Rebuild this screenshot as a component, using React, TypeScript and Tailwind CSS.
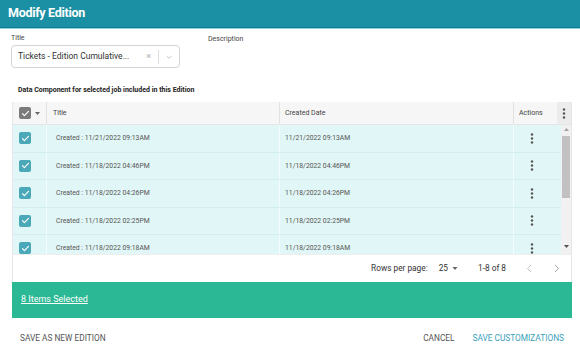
import React from 'react';

const rows = [
  '11/21/2022 09:13AM',
  '11/18/2022 04:46PM',
  '11/18/2022 04:26PM',
  '11/18/2022 02:25PM',
  '11/18/2022 09:18AM',
];

const Check = ({ gray }: { gray?: boolean }) => (
  <div className={`w-[12px] h-[12px] rounded-[2px] flex items-center justify-center ${gray ? 'bg-[#7b7b7b]' : 'bg-[#4aa8b9]'}`}>
    <svg width="9" height="9" viewBox="0 0 24 24" fill="none" stroke="white" strokeWidth="3.2" strokeLinecap="round" strokeLinejoin="round">
      <path d="M4 12.5l5 5L20 6.5" />
    </svg>
  </div>
);

const Dots = () => (
  <svg width="4" height="11" viewBox="0 0 4 11" fill="#555">
    <circle cx="2" cy="1.5" r="1.2" />
    <circle cx="2" cy="5.5" r="1.2" />
    <circle cx="2" cy="9.5" r="1.2" />
  </svg>
);

const App: React.FC = () => {
  return (
    <div className="w-[580px] h-[348px] bg-white overflow-hidden font-['Roboto',sans-serif] text-[#333]">
      {/* header */}
      <div className="h-[27px] bg-[#1b8fa3] flex items-center pl-[8px]">
        <span className="text-white font-bold text-[12.5px] tracking-[-0.3px]">Modify Edition</span>
      </div>
      <div className="h-[1px] bg-[#137e91]" />
      <div className="h-[1px] bg-[#8fd3dd]" />

      {/* form */}
      <div className="flex pl-[11px] pt-[4px]">
        <div className="w-[197px]">
          <div className="text-[7px] text-[#444] leading-[10px]">Title</div>
          <div className="mt-[2px] w-[169px] h-[23px] border border-[#d4d4d4] rounded-[4px] flex items-center pl-[6px]">
            <span className="text-[8.5px] text-[#333] flex-1 whitespace-nowrap">Tickets - Edition Cumulative...</span>
            <span className="text-[#aaa] text-[9px] mr-[7px]">×</span>
            <div className="w-[1px] h-[14px] bg-[#ddd]" />
            <svg className="mx-[6px]" width="8" height="8" viewBox="0 0 24 24" fill="none" stroke="#bbb" strokeWidth="2.5"><path d="M5 9l7 7 7-7" /></svg>
          </div>
        </div>
        <div className="text-[7px] text-[#444] leading-[10px] pt-[1px]">Description</div>
      </div>

      <div className="pl-[18px] mt-[17px] text-[7px] font-bold text-[#222] leading-[10px]">
        Data Component for selected job included in this Edition
      </div>

      {/* table */}
      <div className="ml-[12px] mt-[7px] w-[560px] border-x border-[#e6e6e6]">
        <div className="h-[23px] bg-[#f6f6f6] flex text-[7px] text-[#444] border-b border-[#e4e4e4]">
          <div className="w-[34px] flex items-center pl-[6px] gap-[4px] border-r border-[#e2e2e2]">
            <Check gray />
            <svg width="5" height="3" viewBox="0 0 5 3" fill="#666"><path d="M0 0h5L2.5 3z" /></svg>
          </div>
          <div className="w-[233px] flex items-center pl-[6px] border-r border-[#e2e2e2]">Title</div>
          <div className="w-[234px] flex items-center pl-[5px] border-r border-[#e2e2e2]">Created Date</div>
          <div className="w-[43px] flex items-center pl-[5px]">Actions</div>
          <div className="flex-1 bg-[#ececec] flex items-center justify-center"><Dots /></div>
        </div>
        <div className="h-[129px] overflow-hidden flex">
          <div className="flex-1">
            {rows.map((d) => (
              <div key={d} className="h-[27.5px] flex bg-[#e1f6f6] border-b border-[#d3eeee] text-[6.8px] text-[#555]">
                <div className="w-[34px] flex items-center pl-[6px] border-r border-[#f4fcfc]"><Check /></div>
                <div className="w-[233px] flex items-center pl-[9px] border-r border-[#f4fcfc]">Created : {d}</div>
                <div className="w-[234px] flex items-center pl-[5px] border-r border-[#f4fcfc]">{d}</div>
                <div className="w-[36px] flex items-center justify-center"><Dots /></div>
                <div className="flex-1" />
              </div>
            ))}
          </div>
          <div className="w-[10px] bg-[#f1f1f1] flex flex-col items-center">
            <svg className="mt-[3px]" width="5" height="3" viewBox="0 0 5 3" fill="#a3a3a3"><path d="M2.5 0L5 3H0z" /></svg>
            <div className="mt-[5px] w-[8px] h-[62px] bg-[#c1c1c1]" />
            <div className="flex-1" />
            <svg className="mb-[6px]" width="5" height="3" viewBox="0 0 5 3" fill="#505050"><path d="M0 0h5L2.5 3z" /></svg>
          </div>
        </div>
        <div className="h-[28px] flex items-center justify-end text-[8.3px] text-[#333] border-t border-[#eee]">
          <span>Rows per page:</span>
          <span className="ml-[11px]">25</span>
          <svg className="ml-[4px]" width="6" height="3" viewBox="0 0 5 3" fill="#666"><path d="M0 0h5L2.5 3z" /></svg>
          <span className="ml-[20px]">1-8 of 8</span>
          <svg className="ml-[20px]" width="6" height="9" viewBox="0 0 6 9" fill="none" stroke="#c4c4c4" strokeWidth="1"><path d="M5 1L1.5 4.5 5 8" /></svg>
          <svg className="ml-[22px] mr-[11px]" width="6" height="9" viewBox="0 0 6 9" fill="none" stroke="#aaa" strokeWidth="1"><path d="M1 1l3.5 3.5L1 8" /></svg>
        </div>
      </div>
      <div className="ml-[12px] w-[560px] h-[36px] bg-[#2bb894] flex items-center pl-[9px]">
        <span className="text-white text-[9px] underline">8 Items Selected</span>
      </div>

      {/* actions */}
      <div className="flex items-center h-[40px] text-[8.3px]">
        <span className="ml-[20px] text-[#555]">SAVE AS NEW EDITION</span>
        <span className="ml-auto text-[#555]">CANCEL</span>
        <span className="ml-[18px] mr-[16px] text-[#3aa0b9]">SAVE CUSTOMIZATIONS</span>
      </div>
    </div>
  );
};

export default App;
